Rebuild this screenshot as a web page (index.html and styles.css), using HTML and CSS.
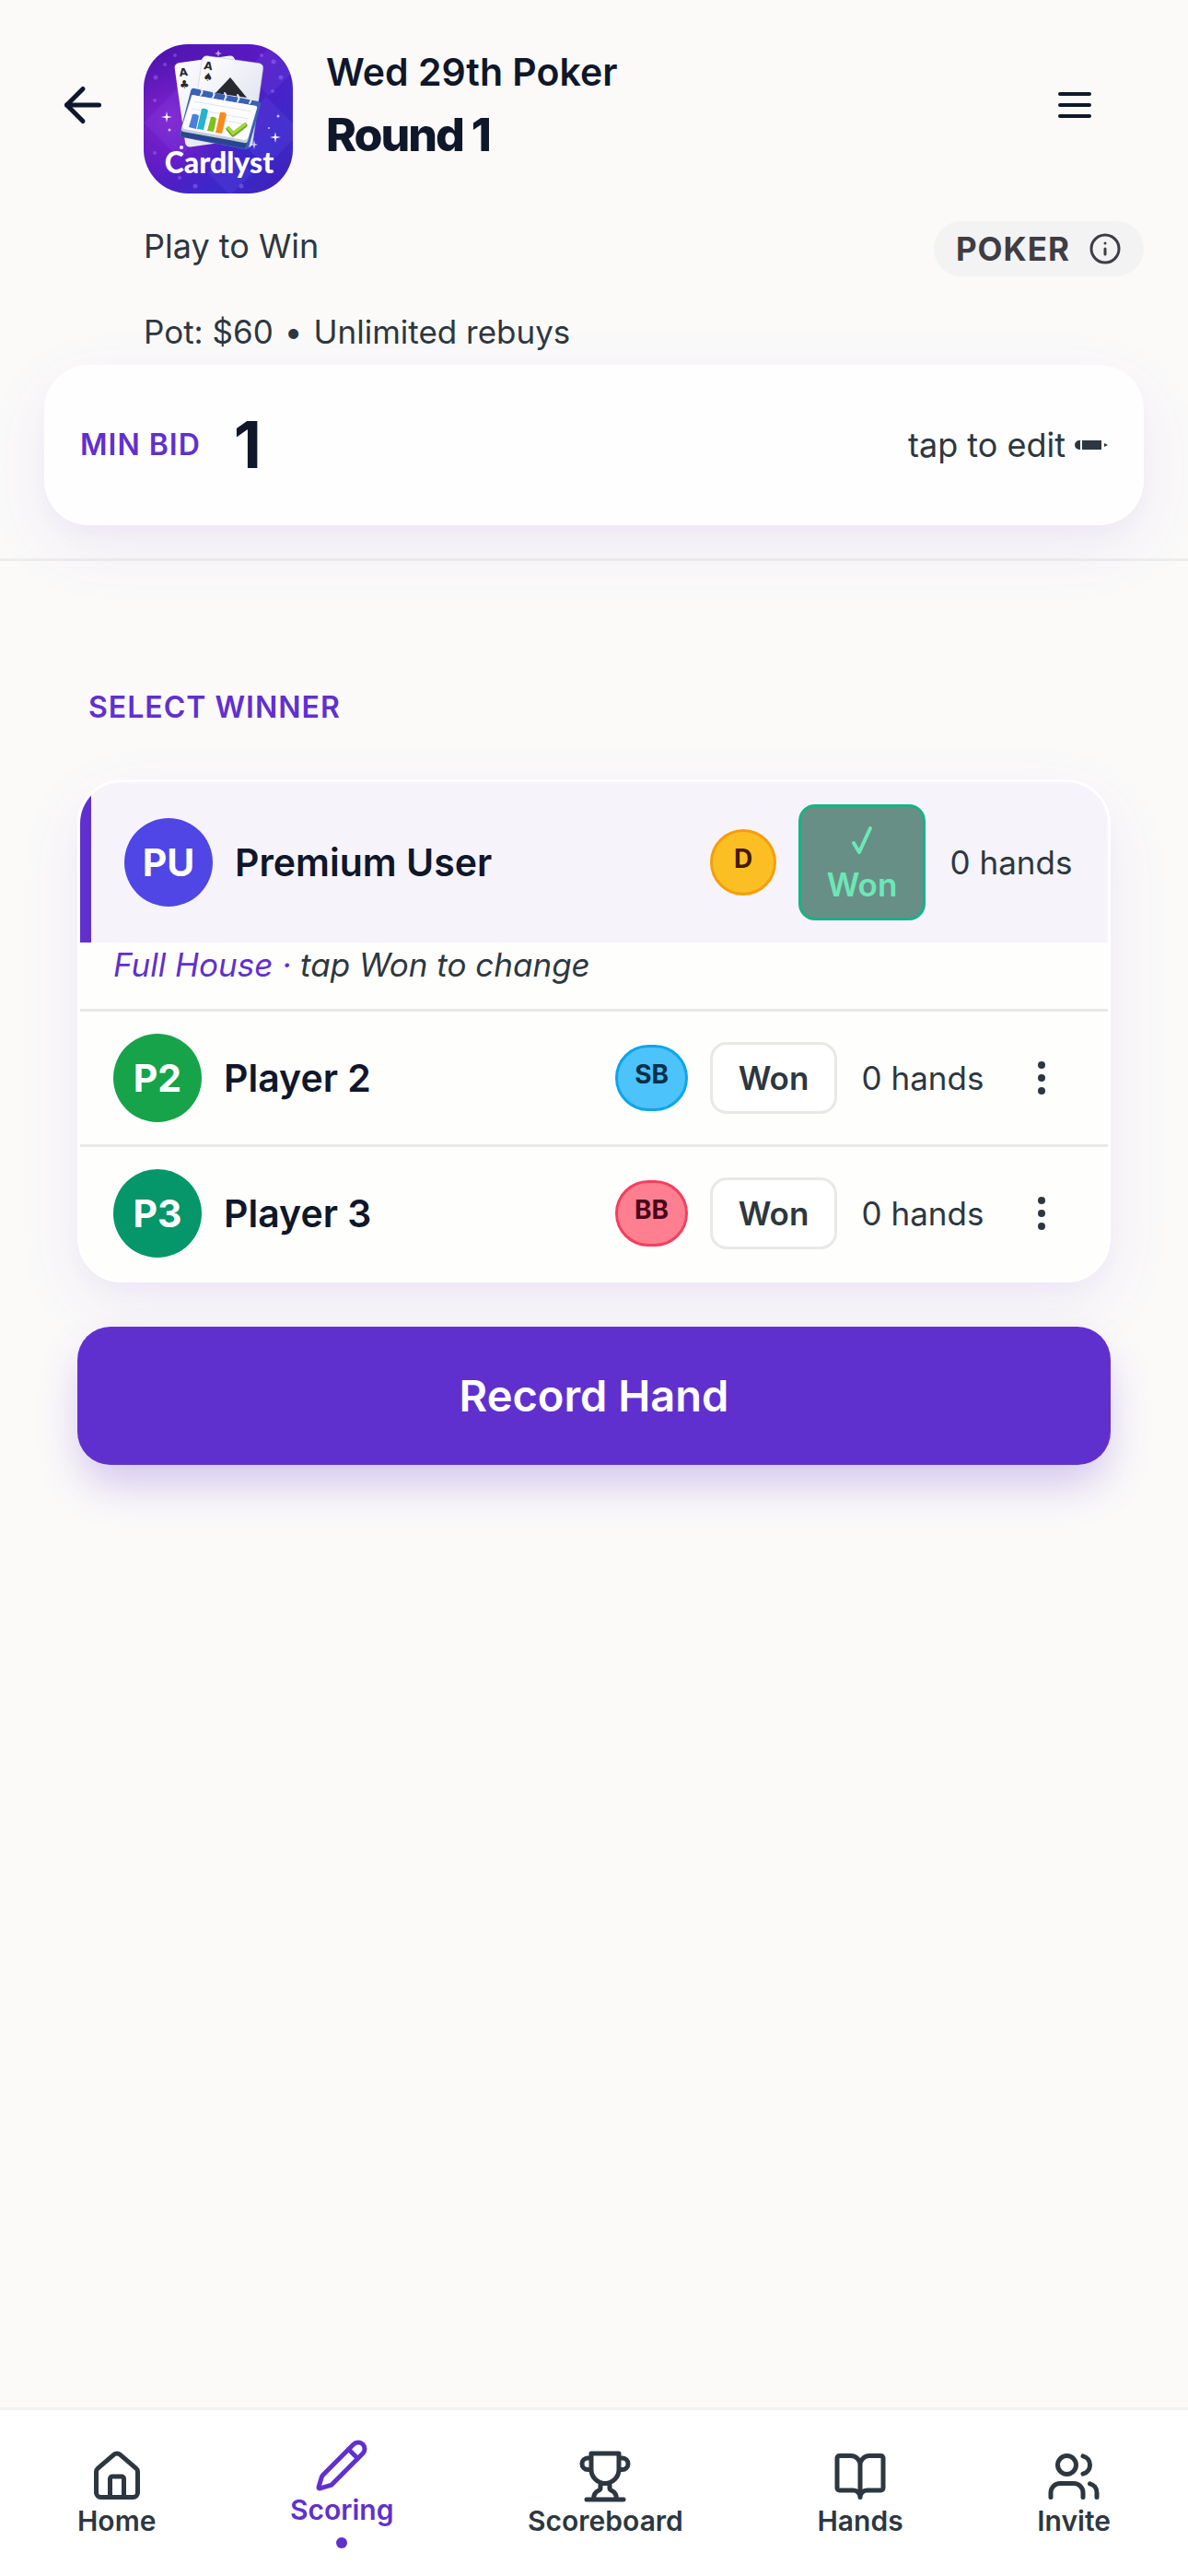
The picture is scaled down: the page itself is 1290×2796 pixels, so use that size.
FILE: index.html
```
<!DOCTYPE html>
<html lang="en">
<head>
    <meta charset="UTF-8">
    <meta name="viewport" content="width=device-width, initial-scale=1.0">
    <title>Cardlyst - Round 1</title>
    <link rel="stylesheet" href="styles.css">
</head>
<body>
    <header class="header">
        <div class="header-top">
            <button class="back-btn" aria-label="Back">
                <svg class="icon" viewBox="0 0 24 24"><path d="M12 19l-7-7 7-7"/><path d="M19 12H5"/></svg>
            </button>
            <svg class="logo" viewBox="0 0 162 162" role="img" aria-label="Cardlyst">
                <defs>
                    <linearGradient id="logo-bg" x1="0" y1="0" x2="1" y2="1">
                        <stop offset="0" stop-color="#4f14ac"/>
                        <stop offset="0.45" stop-color="#5a1cc4"/>
                        <stop offset="0.75" stop-color="#3a2acb"/>
                        <stop offset="1" stop-color="#4420b4"/>
                    </linearGradient>
                    <radialGradient id="logo-glow" cx="0.18" cy="0.5" r="0.42">
                        <stop offset="0" stop-color="#a02ad8" stop-opacity="0.6"/>
                        <stop offset="1" stop-color="#a02ad8" stop-opacity="0"/>
                    </radialGradient>
                    <linearGradient id="card" x1="0" y1="0" x2="1" y2="1">
                        <stop offset="0" stop-color="#ffffff"/>
                        <stop offset="1" stop-color="#d9dcea"/>
                    </linearGradient>
                </defs>
                <rect width="162" height="162" fill="url(#logo-bg)"/>
                <rect width="162" height="162" fill="url(#logo-glow)"/>
                <g fill="#8a6cff" opacity="0.13">
                    <path d="M0 85l38-38 38 38-38 38z"/>
                    <path d="M95 95l38-38 38 38-38 38z"/>
                    <path d="M70 140l24-24 24 24-24 24z"/>
                    <path d="M110 30l26-26 26 26-26 26z"/>
                </g>
                <g fill="#b98cff" opacity="0.35">
                    <circle cx="34" cy="12" r="2"/><circle cx="13" cy="36" r="2.5"/><circle cx="23" cy="22" r="2"/>
                    <circle cx="12" cy="61" r="2"/><circle cx="141" cy="19" r="2.5"/><circle cx="128" cy="12" r="2"/>
                    <circle cx="149" cy="36" r="2.5"/><circle cx="140" cy="51" r="2"/><circle cx="56" cy="154" r="2.5"/>
                    <circle cx="106" cy="154" r="2.5"/><circle cx="12" cy="118" r="2"/><circle cx="39" cy="145" r="2"/>
                </g>
                <rect x="33" y="21" width="66" height="92" rx="5" fill="url(#card)" transform="rotate(-8 33 21)"/>
                <rect x="64" y="12" width="67" height="92" rx="5" fill="url(#card)" stroke="#c3c4d8" stroke-width="0.5" transform="rotate(8 64 12)"/>
                <path d="M94 36L78 53l34 5z" fill="#28282f"/>
                <text class="logo-suit" x="39" y="35" transform="rotate(-6 39 35)">A</text>
                <text class="logo-suit" x="39" y="48" transform="rotate(-3 39 48)">♣</text>
                <text class="logo-suit" x="65" y="27" transform="rotate(8 65 27)">A</text>
                <text class="logo-suit" x="64" y="39" transform="rotate(8 64 39)">♠</text>
                <path d="M55 48l69 14q4 1 3 4l-13 46q-1 3-5 2l-67-13q-4-1-3-4l12-46q1-4 4-3z" fill="#3a62b4"/>
                <path d="M40 100l70 13 2-6-70-14z" fill="#27468f"/>
                <path d="M52 55l70 12q2 1 1 3l-10 35q-1 3-4 2l-66-12q-3-1-2-4z" fill="#c9ccda"/>
                <path d="M53 55l69 12q1 1 1 2l-10 33q-1 2-4 2l-65-12q-2-1-2-3z" fill="#fdfdff"/>
                <g stroke="#d8dcec" stroke-width="0.8">
                    <path d="M55 62l62 11M52 70l62 11M51 76l60 11"/>
                </g>
                <g fill="none" stroke="#e8ecf5" stroke-width="2" stroke-linecap="round">
                    <path d="M62 48q3 3 0 7M75 51q3 3 0 7M88 53q3 3 0 7M102 55q3 3 0 7M115 57q3 3 0 7"/>
                </g>
                <path d="M53 76q5-1 7 2l-3 14-8-2z" fill="#4a7fdc"/>
                <path d="M63 70q5-1 7 2l-5 21-7-1z" fill="#27b3c9"/>
                <path d="M73 79q4-1 6 2l-3 14-7-1z" fill="#7cc11f"/>
                <path d="M83 74q5-1 7 2l-5 21-7-1z" fill="#f98b1c"/>
                <path d="M92 92l5 6 13-10" fill="none" stroke="#6ba51d" stroke-width="5" stroke-linecap="round" stroke-linejoin="round"/>
                <path d="M92 91l5 6 13-10" fill="none" stroke="#a5da3c" stroke-width="3" stroke-linecap="round" stroke-linejoin="round"/>
                <g fill="#fff">
                    <path d="M25 73l1 5 5 1-5 1-1 5-1-5-5-1 5-1z"/>
                    <path d="M143 95l1 5 5 1-5 1-1 5-1-5-5-1 5-1z"/>
                    <path d="M120 104l1 4 3 1-3 1-1 4-1-4-3-1 3-1z" opacity="0.7"/>
                    <path d="M81 6l1 3 3 1-3 1-1 3-1-3-3-1 3-1z" opacity="0.6"/>
                    <circle cx="41" cy="112" r="2"/><circle cx="28" cy="93" r="1.5" opacity="0.7"/>
                    <circle cx="146" cy="78" r="1.5" opacity="0.7"/><circle cx="136" cy="91" r="1" opacity="0.7"/>
                </g>
                <text class="logo-name" x="82" y="140" text-anchor="middle">Cardlyst</text>
            </svg>
            <div class="titles">
                <p class="game-name">Wed 29th Poker</p>
                <h1 class="round-name">Round 1</h1>
            </div>
            <button class="menu-btn" aria-label="Menu">
                <svg class="icon" viewBox="0 0 24 24"><path d="M4 6h16M4 12h16M4 18h16"/></svg>
            </button>
        </div>
        <div class="header-info">
            <p>Play to Win</p>
            <button class="game-type">
                POKER
                <svg class="icon" viewBox="0 0 24 24"><circle cx="12" cy="12" r="10"/><path d="M12 16v-4M12 8h.01"/></svg>
            </button>
        </div>
        <p class="pot"><span>Pot: $60</span><span>•</span><span>Unlimited rebuys</span></p>
        <button class="bid-card">
            <span class="bid-label">MIN BID</span>
            <span class="bid-value">1</span>
            <span class="bid-edit">tap to edit</span>
            <svg class="bid-pencil" viewBox="0 0 36 12"><path d="M6 1v10H5A5 5 0 0 1 5 1zM8 1h21v10H8zM32 4l4 2-4 2z"/></svg>
        </button>
    </header>

    <main class="main">
        <h2 class="section-title">SELECT WINNER</h2>
        <ul class="player-list">
            <li class="player">
                <div class="player-row winner">
                    <span class="avatar avatar-indigo">PU</span>
                    <span class="player-name">Premium User</span>
                    <span class="badge badge-dealer">D</span>
                    <button class="won-btn active">
                        <svg viewBox="0 0 26 30"><path d="M4 18l6 10L22 2"/></svg>
                        Won
                    </button>
                    <span class="hands">0 hands</span>
                </div>
                <p class="hint"><span>Full House ·</span> tap Won to change</p>
            </li>
            <li class="player">
                <div class="player-row">
                    <span class="avatar avatar-green">P2</span>
                    <span class="player-name">Player 2</span>
                    <span class="badge badge-small">SB</span>
                    <button class="won-btn">Won</button>
                    <span class="hands">0 hands</span>
                    <button class="more-btn" aria-label="Player 2 options">
                        <svg viewBox="0 0 8 36"><circle cx="4" cy="4" r="4"/><circle cx="4" cy="18" r="4"/><circle cx="4" cy="32" r="4"/></svg>
                    </button>
                </div>
            </li>
            <li class="player">
                <div class="player-row">
                    <span class="avatar avatar-teal">P3</span>
                    <span class="player-name">Player 3</span>
                    <span class="badge badge-big">BB</span>
                    <button class="won-btn">Won</button>
                    <span class="hands">0 hands</span>
                    <button class="more-btn" aria-label="Player 3 options">
                        <svg viewBox="0 0 8 36"><circle cx="4" cy="4" r="4"/><circle cx="4" cy="18" r="4"/><circle cx="4" cy="32" r="4"/></svg>
                    </button>
                </div>
            </li>
        </ul>
        <button class="record-btn">Record Hand</button>
    </main>

    <nav class="tab-bar">
        <a href="#home">
            <svg class="icon" viewBox="0 0 24 24"><path d="M15 21v-8a1 1 0 0 0-1-1h-4a1 1 0 0 0-1 1v8"/><path d="M3 10a2 2 0 0 1 .709-1.528l7-5.999a2 2 0 0 1 2.582 0l7 5.999A2 2 0 0 1 21 10v9a2 2 0 0 1-2 2H5a2 2 0 0 1-2-2z"/></svg>
            Home
        </a>
        <a href="#scoring" class="current" aria-current="page">
            <svg class="icon" viewBox="0 0 24 24"><path d="M21.174 6.812a1 1 0 0 0-3.986-3.987L3.842 16.174a2 2 0 0 0-.5.83l-1.321 4.352a.5.5 0 0 0 .623.622l4.353-1.32a2 2 0 0 0 .83-.497z"/><path d="M15 5l4 4"/></svg>
            Scoring
        </a>
        <a href="#scoreboard">
            <svg class="icon" viewBox="0 0 24 24"><path d="M6 9H4.5a2.5 2.5 0 0 1 0-5H6M18 9h1.5a2.5 2.5 0 0 0 0-5H18M4 22h16M10 14.66V17c0 .55-.47.98-.97 1.21C7.85 18.75 7 20.24 7 22M14 14.66V17c0 .55.47.98.97 1.21C16.15 18.75 17 20.24 17 22M18 2H6v7a6 6 0 0 0 12 0z"/></svg>
            Scoreboard
        </a>
        <a href="#hands">
            <svg class="icon" viewBox="0 0 24 24"><path d="M12 7v14M3 18a1 1 0 0 1-1-1V4a1 1 0 0 1 1-1h5a4 4 0 0 1 4 4 4 4 0 0 1 4-4h5a1 1 0 0 1 1 1v13a1 1 0 0 1-1 1h-6a3 3 0 0 0-3 3 3 3 0 0 0-3-3z"/></svg>
            Hands
        </a>
        <a href="#invite">
            <svg class="icon" viewBox="0 0 24 24"><path d="M16 21v-2a4 4 0 0 0-4-4H6a4 4 0 0 0-4 4v2"/><circle cx="9" cy="7" r="4"/><path d="M22 21v-2a4 4 0 0 0-3-3.87M16 3.13a4 4 0 0 1 0 7.75"/></svg>
            Invite
        </a>
    </nav>
</body>
</html>
```
FILE: styles.css
```
* {
    margin: 0;
    padding: 0;
    box-sizing: border-box;
}
body {
    font-family: 'Inter', sans-serif;
    font-size: 35px;
    line-height: 54px;
    color: #2d3740;
    background-color: #fbfaf9;
    min-height: 100vh;
    display: flex;
    flex-direction: column;
}
button {
    font: inherit;
    color: inherit;
    background: none;
    border: none;
    cursor: pointer;
}
.icon {
    width: 60px;
    height: 60px;
    fill: none;
    stroke: currentColor;
    stroke-width: 2;
    stroke-linecap: round;
    stroke-linejoin: round;
}

/* header */
.header {
    padding: 48px 48px 36px;
    border-bottom: 3px solid #efeeee;
}
.header-top {
    display: flex;
    align-items: flex-start;
    color: #0f172a;
}
.back-btn,
.menu-btn {
    height: 132px;
    display: flex;
    align-items: center;
    justify-content: center;
}
.back-btn {
    width: 84px;
    margin-right: 24px;
}
.menu-btn {
    width: 150px;
}
.menu-btn .icon {
    width: 48px;
    height: 48px;
}
.logo {
    width: 162px;
    height: 162px;
    border-radius: 48px;
    margin-right: 36px;
}
.logo-suit {
    font: bold 12px 'DejaVu Sans', sans-serif;
    fill: #28282f;
}
.logo-name {
    font: 900 32px 'Lato', sans-serif;
    fill: #fff;
}
.titles {
    flex: 1;
}
.game-name {
    font-size: 41px;
    font-weight: 600;
    line-height: 60px;
}
.round-name {
    font-size: 50px;
    font-weight: 800;
    line-height: 76px;
    letter-spacing: -2px;
}
.header-info {
    display: flex;
    align-items: flex-start;
    justify-content: space-between;
    margin-top: 30px;
    padding-left: 108px;
    font-size: 36px;
}
.game-type {
    height: 60px;
    padding: 0 24px;
    border-radius: 30px;
    background-color: #f3f3f3;
    color: #3f3d44;
    font-size: 35px;
    font-weight: 700;
    letter-spacing: 1px;
    display: flex;
    align-items: center;
    gap: 20px;
}
.game-type .icon {
    width: 36px;
    height: 36px;
}
.pot {
    margin-top: 33px;
    padding-left: 108px;
    display: flex;
    gap: 12px;
}
.bid-card {
    width: 100%;
    height: 174px;
    margin-top: 9px;
    padding: 0 39px;
    border-radius: 48px;
    background-color: #fefefe;
    box-shadow: 0 24px 72px rgba(96, 48, 207, 0.08), 0 12px 24px -6px rgba(96, 48, 207, 0.04);
    display: flex;
    align-items: center;
}
.bid-label,
.section-title {
    font-size: 32px;
    font-weight: 600;
    letter-spacing: 1px;
    color: #6030cf;
}
.bid-value {
    flex: 1;
    margin-left: 36px;
    font-size: 70px;
    font-weight: 700;
    text-align: left;
    color: #0f172a;
}
.bid-edit {
    font-size: 36px;
}
.bid-pencil {
    width: 36px;
    height: 12px;
    margin-left: 10px;
    fill: currentColor;
}

/* players */
.main {
    padding: 132px 84px 48px;
}
.section-title {
    padding-left: 12px;
    margin-bottom: 51px;
}
.player-list {
    list-style: none;
    border: 3px solid #fff;
    border-radius: 48px;
    overflow: hidden;
    background-color: #fefefd;
    box-shadow: 0 24px 72px rgba(96, 48, 207, 0.08), 0 12px 24px -6px rgba(96, 48, 207, 0.04);
}
.player + .player {
    border-top: 3px solid #e8e8e7;
}
.player-row {
    min-height: 144px;
    padding: 24px 36px;
    display: flex;
    align-items: center;
    gap: 24px;
}
.player-row.winner {
    border-left: 12px solid #6030cf;
    background-color: #f6f3fb;
}
.avatar {
    width: 96px;
    height: 96px;
    border-radius: 50%;
    color: #fff;
    font-size: 41px;
    font-weight: 700;
    display: flex;
    align-items: center;
    justify-content: center;
}
.avatar-indigo {
    background-color: #4f46e5;
}
.avatar-green {
    background-color: #17a34a;
}
.avatar-teal {
    background-color: #059669;
}
.player-name {
    flex: 1;
    font-size: 41px;
    font-weight: 600;
    color: #0f172a;
}
.badge {
    min-width: 72px;
    height: 72px;
    padding: 0 18px 9px;
    border: 3px solid;
    border-radius: 36px;
    font-size: 28px;
    font-weight: 700;
    display: flex;
    align-items: center;
    justify-content: center;
}
.badge-dealer {
    color: #451a03;
    background-color: #fbbf24;
    border-color: #f59e0b;
}
.badge-small {
    color: #082f49;
    background-color: #4cc3fb;
    border-color: #0ea5e9;
}
.badge-big {
    color: #4c0519;
    background-color: #fd7f90;
    border-color: #f43f5e;
}
.won-btn {
    width: 138px;
    height: 78px;
    border: 3px solid #e8e8e7;
    border-radius: 18px;
    background-color: #fff;
    font-weight: 600;
    line-height: 48px;
    display: flex;
    flex-direction: column;
    align-items: center;
    justify-content: center;
}
.won-btn.active {
    height: 126px;
    color: #6ee7b7;
    background-color: #678f86;
    border-color: #19b286;
}
.won-btn svg {
    width: 26px;
    height: 30px;
    margin: 9px 0;
    fill: none;
    stroke: currentColor;
    stroke-width: 4;
    stroke-linecap: round;
    stroke-linejoin: round;
}
.hands {
    width: 138px;
    text-align: center;
    white-space: nowrap;
}
.more-btn {
    width: 72px;
    height: 72px;
    display: flex;
    align-items: center;
    justify-content: center;
}
.more-btn svg {
    width: 8px;
    height: 36px;
    fill: currentColor;
}
.hint {
    padding: 0 36px 24px;
    line-height: 48px;
    font-style: italic;
}
.hint span {
    color: #6030cf;
}
.record-btn {
    width: 100%;
    height: 150px;
    margin-top: 48px;
    border-radius: 36px;
    background-color: #6030cf;
    box-shadow: 0 24px 48px -6px rgba(96, 48, 207, 0.28);
    color: #fff;
    font-size: 47px;
    font-weight: 600;
}

/* bottom tabs */
.tab-bar {
    height: 183px;
    margin-top: auto;
    padding: 0 84px;
    border-top: 3px solid #f3f2f1;
    background-color: #fff;
    display: flex;
    align-items: center;
    justify-content: space-between;
}
.tab-bar a {
    display: flex;
    flex-direction: column;
    align-items: center;
    color: inherit;
    font-size: 30px;
    font-weight: 600;
    line-height: 36px;
    text-decoration: none;
}
.tab-bar .current {
    color: #6030cf;
}
.tab-bar .current::after {
    content: '';
    width: 12px;
    height: 12px;
    margin-top: 12px;
    border-radius: 50%;
    background-color: #6030cf;
}
```
